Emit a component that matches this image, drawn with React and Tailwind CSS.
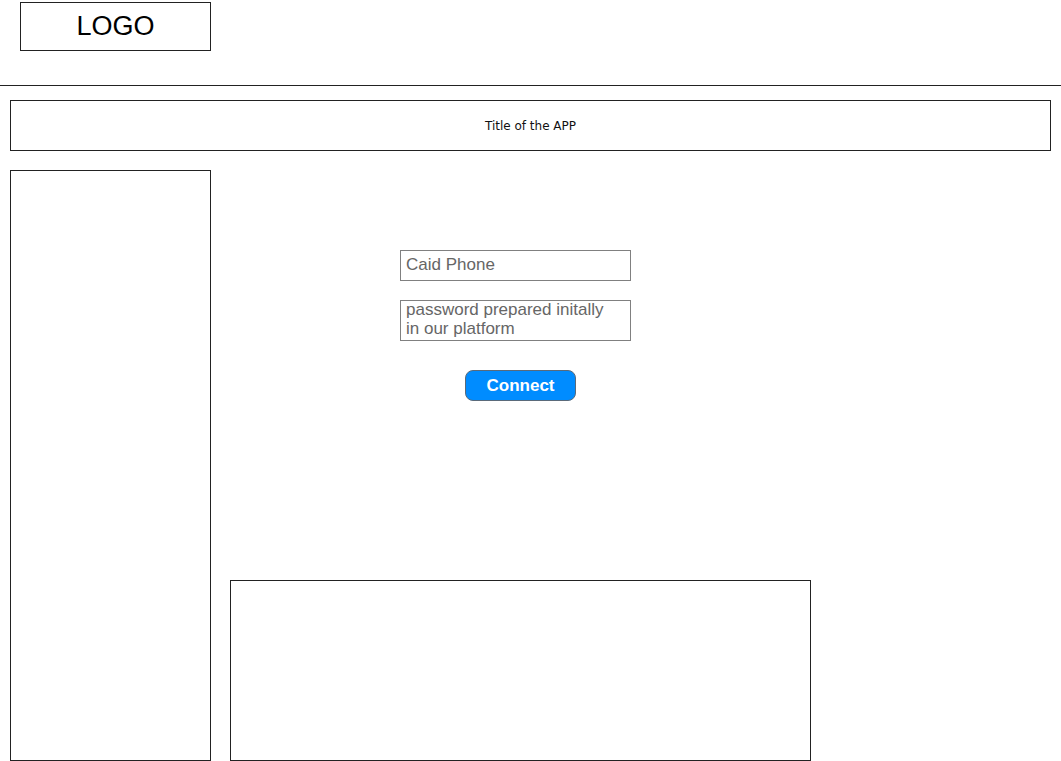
import React from "react";

export default function App() {
  return (
    <div className="w-[1061px] h-[761px] bg-white overflow-hidden flex flex-col" style={{ fontFamily: '"Liberation Sans", Arial, sans-serif' }}>
      <header className="h-[86px] border-b border-[#222] pt-[2px] pl-[20px] shrink-0">
        <div className="w-[191px] h-[49px] border border-[#222] flex items-center justify-center text-[27px] text-black leading-none">
          LOGO
        </div>
      </header>
      <div className="mt-[14px] mx-[10px] h-[51px] border border-[#222] flex items-center justify-center text-[12px] text-[#111] shrink-0" style={{ fontFamily: '"DejaVu Sans", Verdana, sans-serif' }}>
        Title of the APP
      </div>
      <div className="mt-[19px] ml-[10px] flex flex-1 min-h-0">
        <aside className="w-[201px] h-[591px] border border-[#222] shrink-0"></aside>
        <main className="ml-[19px] w-[581px] flex flex-col">
          <div className="h-[410px] pt-[80px] pl-[170px]">
            <div className="w-[231px] h-[31px] border border-[#808080] pl-[5px] text-[17px] leading-[28px] text-[#666]">
              Caid Phone
            </div>
            <div className="mt-[19px] w-[231px] h-[41px] border border-[#808080] pl-[5px] text-[17px] leading-[19px] text-[#666] -mt-0">
              <div className="-mt-[1px]">password prepared initally<br />in our platform</div>
            </div>
            <div className="mt-[29px] ml-[65px] w-[111px] h-[31px] rounded-[8px] border border-[#5a6a7a] bg-[#008cff] flex items-center justify-center text-white font-bold text-[17px]">
              Connect
            </div>
          </div>
          <div className="w-[581px] h-[181px] border border-[#222]"></div>
        </main>
      </div>
    </div>
  );
}
